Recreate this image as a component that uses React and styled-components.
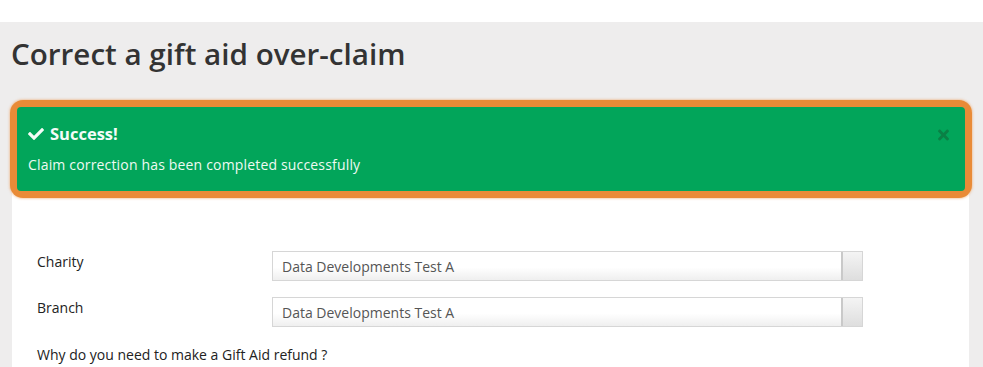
import styled, { createGlobalStyle } from "styled-components";
import { FaCheck, FaTimes } from "react-icons/fa";

const GlobalStyle = createGlobalStyle`
    body{
        margin: 0;
        font-family: "Open Sans", "Liberation Sans", sans-serif;
        background: #ffffff;
    }
`;

export default function App(){
    const rows = [
        { label: "Charity", value: "Data Developments Test A" },
        { label: "Branch", value: "Data Developments Test A" }
    ];

    return(
        <>
            <GlobalStyle/>
            <Pagina>
                <Conteudo>
                    <Titulo>Correct a gift aid over-claim</Titulo>
                    <Destaque>
                        <Alerta>
                            <AlertaTopo>
                                <h4>
                                    <FaCheck/>
                                    Success!
                                </h4>
                                <Fechar aria-label="close">
                                    <FaTimes/>
                                </Fechar>
                            </AlertaTopo>
                            <p>Claim correction has been completed successfully</p>
                        </Alerta>
                    </Destaque>
                    <Painel>
                        {rows.map((r) => (
                            <Linha key={r.label}>
                                <Rotulo>{r.label}</Rotulo>
                                <Caixa>
                                    <span>{r.value}</span>
                                    <Seta/>
                                </Caixa>
                            </Linha>
                        ))}
                        <Pergunta>Why do you need to make a Gift Aid refund ?</Pergunta>
                    </Painel>
                </Conteudo>
            </Pagina>
        </>
    );
};

const Pagina = styled.div`
        padding-top: 22px;
        width: 983px;
        height: 345px;
        overflow: hidden;
`;

const Conteudo = styled.div`
        background-color: #eeeded;
        height: 100%;
        padding: 0 14px 0 12px;
        box-sizing: border-box;
`;

const Titulo = styled.h1`
        margin: 0;
        padding: 10px 0 0 0;
        margin-left: -1px;
        height: 68px;
        font-size: 29.6px;
        line-height: 44px;
        font-weight: 600;
        color: #333333;
`;

const Destaque = styled.div`
        margin: 0 -3px 0 -2px;
        padding: 7px;
        background-color: #e98b37;
        border-radius: 13px;
        box-shadow: 0 0 2px 1px rgba(240, 170, 110, 0.5);
        position: relative;
        z-index: 1;
`;

const Alerta = styled.div`
        background-color: #02a55a;
        border-radius: 4px;
        height: 84px;
        box-sizing: border-box;
        padding: 16px 14px 0 11px;
        color: #ffffff;
        p{
            margin: 10px 0 0 0;
            font-size: 14px;
            line-height: 20px;
            letter-spacing: 0.17px;
            color: #eefaf2;
        }
`;

const AlertaTopo = styled.div`
        display: flex;
        justify-content: space-between;
        align-items: center;
        h4{
            margin: 0;
            display: flex;
            align-items: center;
            gap: 6px;
            font-size: 16.5px;
            line-height: 22px;
            font-weight: 700;
            color: #f4fcf7;
            svg{
                width: 16px;
                height: 16px;
            }
        }
`;

const Fechar = styled.button`
        border: none;
        background: none;
        padding: 0;
        display: flex;
        color: #0a8045;
        margin-top: 2px;
        svg{
            width: 15px;
            height: 16px;
        }
`;

const Painel = styled.div`
        background-color: #ffffff;
        padding: 60px 25px 0 25px;
        height: 170px;
        margin-top: -7px;
`;

const Linha = styled.div`
        display: flex;
        align-items: flex-start;
        margin-bottom: 16px;
`;

const Rotulo = styled.label`
        width: 235px;
        padding-top: 1px;
        font-size: 14px;
        line-height: 20px;
        color: #222222;
`;

const Caixa = styled.div`
        width: 591px;
        height: 30px;
        box-sizing: border-box;
        display: flex;
        align-items: center;
        justify-content: space-between;
        border: 1px solid #d6d6d6;
        background: linear-gradient(#ffffff 55%, #efefef);
        span{
            padding-left: 9px;
            font-size: 14px;
            color: #555555;
        }
`;

const Seta = styled.div`
        width: 19px;
        height: 28px;
        border-left: 2px solid #c9c9c9;
        background: linear-gradient(#f4f4f4, #dedede);
`;

const Pergunta = styled.div`
        padding-top: 2px;
        font-size: 14px;
        line-height: 20px;
        color: #222222;
`;
